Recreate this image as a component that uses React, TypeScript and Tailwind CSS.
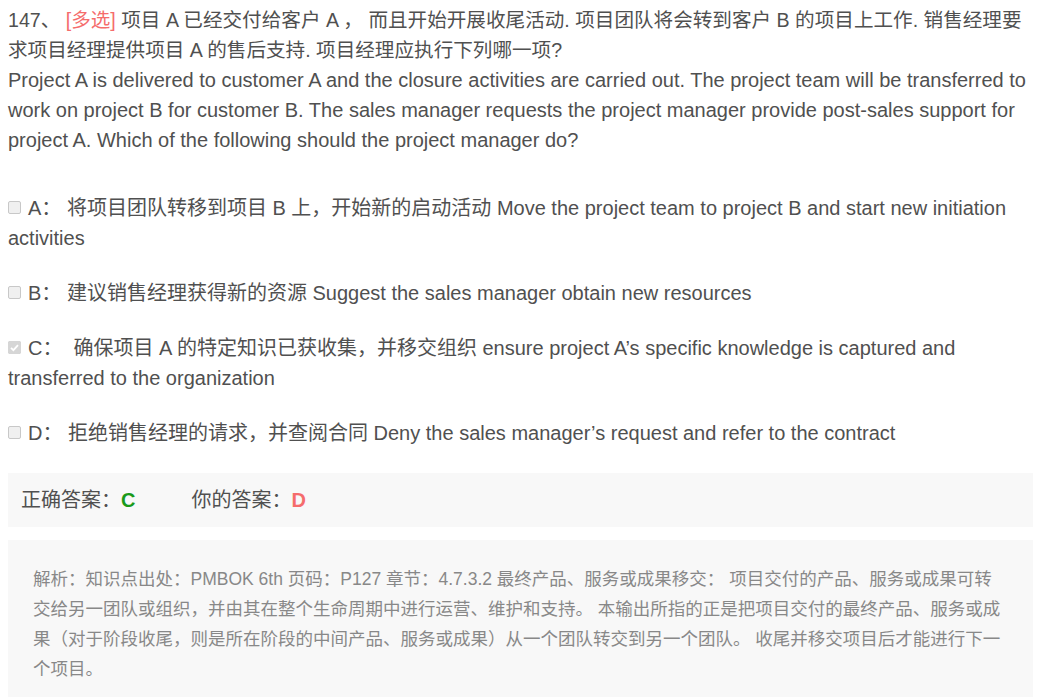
import React from "react";

const font = { fontFamily: '"Liberation Sans", Arial, "Noto Sans CJK SC", sans-serif' };

function Box({ checked }: { checked?: boolean }) {
  return (
    <span className="inline-block align-middle mr-[7px] relative top-[-2px] w-[13px] h-[13px] rounded-[2px] border border-[#c8c8c8] bg-[#f0f0f0]">
      {checked && (
        <svg viewBox="0 0 13 13" className="absolute left-[-1px] top-[-1px] w-[13px] h-[13px]">
          <rect x="0" y="0" width="13" height="13" rx="2" fill="#d6d6d6" />
          <path d="M3 6.8 L5.4 9.2 L10 4.2" stroke="#fff" strokeWidth="1.8" fill="none" />
        </svg>
      )}
    </span>
  );
}

export default function App() {
  const opts: { t: string; c?: boolean }[] = [
    { t: "A： 将项目团队转移到项目 B 上，开始新的启动活动 Move the project team to project B and start new initiation activities" },
    { t: "B： 建议销售经理获得新的资源 Suggest the sales manager obtain new resources" },
    { t: "C：  确保项目 A 的特定知识已获收集，并移交组织 ensure project A’s specific knowledge is captured and transferred to the organization", c: true },
    { t: "D： 拒绝销售经理的请求，并查阅合同 Deny the sales manager’s request and refer to the contract" },
  ];
  const expl = [
    "解析：知识点出处：PMBOK 6th 页码：P127 章节：4.7.3.2 最终产品、服务或成果移交： 项目交付的产品、服务或成果可转",
    "交给另一团队或组织，并由其在整个生命周期中进行运营、维护和支持。 本输出所指的正是把项目交付的最终产品、服务或成",
    "果（对于阶段收尾，则是所在阶段的中间产品、服务或成果）从一个团队转交到另一个团队。 收尾并移交项目后才能进行下一",
    "个项目。",
  ];
  return (
    <div className="w-[1041px] h-[697px] overflow-hidden bg-white text-[#505050]" style={font}>
      <div className="px-[8px] pt-[5px] text-[20px] leading-[30px]">
        <div className="text-[19.6px]">
          147、 <span className="text-[#f56c6c]">[多选]</span> 项目 A 已经交付给客户 A ， 而且开始开展收尾活动. 项目团队将会转到客户 B 的项目上工作. 销售经理要求项目经理提供项目 A 的售后支持. 项目经理应执行下列哪一项?
        </div>
        <div>
          Project A is delivered to customer A and the closure activities are carried out. The project team will be transferred to work on project B for customer B. The sales manager requests the project manager provide post-sales support for project A. Which of the following should the project manager do?
        </div>
        <div className="mt-[38px] flex flex-col gap-[25px]">
          {opts.map((o, i) => (
            <div key={i} className="whitespace-pre-wrap">
              <Box checked={o.c} />
              {o.t}
            </div>
          ))}
        </div>
      </div>
      <div className="mx-[8px] mt-[25px] h-[54px] bg-[#f8f8f8] flex items-center pl-[13px] text-[20px]">
        <span>正确答案：</span>
        <span className="text-[#1a9a1a] font-bold">C</span>
        <span className="ml-[56px]">你的答案：</span>
        <span className="text-[#f56c6c] font-bold">D</span>
      </div>
      <div className="mx-[8px] mt-[13px] bg-[#f8f8f8] pl-[25px] pr-[10px] pt-[24px] pb-[30px] text-[17.5px] leading-[30px] text-[#888888]">
        {expl.map((l, i) => (
          <div key={i} className="whitespace-nowrap">{l}</div>
        ))}
      </div>
    </div>
  );
}
